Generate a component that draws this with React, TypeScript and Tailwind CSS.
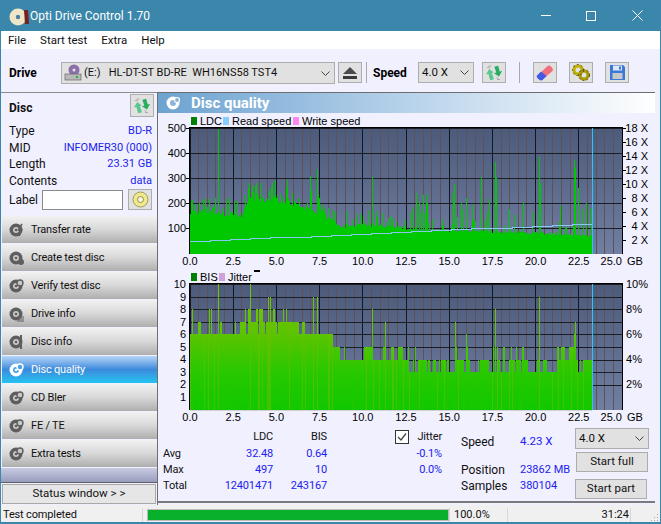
const UI = { fontFamily: "Roboto, 'Noto Sans', sans-serif" }

// small seeded generator so the chart looks the same on every run
let seed = 7
const rnd = () => {
    seed = (seed * 16807) % 2147483647
    return seed / 2147483647
}

const lerp = (pts: number[][], x: number) => {
    for (let i = 1; i < pts.length; i++) {
        if (x <= pts[i][0]) {
            const [x0, y0] = pts[i - 1]
            const [x1, y1] = pts[i]
            return y0 + ((y1 - y0) * (x - x0)) / (x1 - x0)
        }
    }
    return pts[pts.length - 1][1]
}

const LEFT = 190
const END = 592
const GB = 17.28

const LDC_ENV = [[0, 175], [1, 170], [3, 165], [3.4, 225], [5, 230], [6.5, 190], [7.5, 165], [8.3, 135], [8.7, 110], [10, 120], [12.5, 105], [13, 96], [17, 92], [20, 85], [23.4, 72]]
const LDC_SPIKES: Record<number, number> = { 218: 497, 495: 364, 539: 384, 574: 372, 578: 260, 481: 304, 453: 240, 466: 220, 372: 304, 317: 332, 310: 308, 496: 300, 540: 280, 575: 340 }

const ldcPath = () => {
    let d = ""
    for (let x = LEFT; x <= END; x++) {
        const base = lerp(LDC_ENV, (x - LEFT) / GB)
        let v = base * (0.88 + rnd() * 0.12)
        if (x < 400) {
            if (rnd() < 0.4) v += rnd() * (x < 250 ? 65 : x < 320 ? 85 : 70)
        } else if (rnd() < 0.35) {
            v += rnd() * rnd() * 200
        }
        if (LDC_SPIKES[x]) v = LDC_SPIKES[x]
        d += `M${x + 0.5} 254V${(253 - v * 0.25).toFixed(0)}`
    }
    return d
}

const BIS_SPIKES: Record<number, number> = { 218: 10, 250: 10, 268: 9, 270: 9, 313: 9, 317: 9, 539: 9, 495: 8, 455: 7, 575: 7, 466: 6, 574: 6, 192: 8, 209: 8, 211: 8, 245: 8, 257: 8, 262: 8, 372: 8, 385: 7 }

let prevLevel = 6
const bisLevel = (x: number) => {
    if (rnd() < 0.4) return prevLevel
    const g = (x - LEFT) / GB
    const r = rnd()
    if (g < 3.3) return r < 0.18 ? 7 : 6
    if (g < 6.5) return r < 0.22 ? 8 : r < 0.9 ? 7 : 6
    if (g < 8) return r < 0.2 ? 7 : 6
    if (g < 8.6) return r < 0.3 ? 6 : 5
    if (g < 12.5) return r < 0.22 ? 5 : r < 0.3 ? 6 : 4
    return r < 0.5 ? 4 : r < 0.58 ? 5 : 3
}

const bisPaths = () => {
    let main = ""
    let streak = ""
    let dark = ""
    for (let x = LEFT; x <= END; x++) {
        prevLevel = bisLevel(x)
        let v = prevLevel
        if (BIS_SPIKES[x]) v = BIS_SPIKES[x]
        if (x > 591) v = 2
        const top = (410 - v * 12.6).toFixed(0)
        main += `M${x + 0.5} 410V${top}`
        if (rnd() < 0.1 || BIS_SPIKES[x] > 8) streak += `M${x + 0.5} 410V${top}`
        if (rnd() < 0.25) dark += `M${x + 0.5} 410V${(410 - Math.min(v, 3) * 12.6 + 6 + rnd() * 20).toFixed(0)}`
    }
    return { main, streak, dark }
}

const readLine = () => {
    let d = `M${LEFT} 241`
    const n = 20
    for (let i = 1; i <= n; i++) {
        const x = LEFT + (i * (END - LEFT)) / n
        const y = 241 - (i * 18) / n
        d += `H${x.toFixed(0)}V${y.toFixed(0)}`
    }
    return d
}

const LDC_D = ldcPath()
const BIS_D = bisPaths()
const READ_D = readLine()

const XLABELS = ["0.0", "2.5", "5.0", "7.5", "10.0", "12.5", "15.0", "17.5", "20.0", "22.5"]

interface PlotProps {
    id: string
    top: number
    bottom: number
    hLines: number[]
}

const Plot = ({ id, top, bottom, hLines }: PlotProps) => {
    const minors = Array.from({ length: 50 }, (_, i) => i)
    return (
        <>
            <defs>
                <linearGradient id={id} x1="0" y1="0" x2="0" y2="1">
                    <stop offset="0" stopColor="#4c5b7b" />
                    <stop offset="1" stopColor="#707fa2" />
                </linearGradient>
            </defs>
            <rect x={LEFT} y={top} width={432} height={bottom - top} fill={`url(#${id})`} />
            {minors.map((i) => (
                <line key={i} x1={LEFT + 8.64 * i} x2={LEFT + 8.64 * i} y1={top} y2={bottom} stroke={i % 5 === 0 ? "#16161e" : "#5d5258"} strokeWidth="1" shapeRendering="crispEdges" />
            ))}
            {hLines.map((y) => (
                <line key={y} x1={LEFT} x2={622} y1={y} y2={y} stroke="#1c1c24" strokeWidth="1" shapeRendering="crispEdges" />
            ))}
        </>
    )
}

const Axis = ({ top, bottom, y }: { top: number; bottom: number; y: number }) => (
    <>
        <path d={`M${LEFT - 0.5} ${bottom}V${top - 0.5}H622.5V${bottom}`} fill="none" stroke="#000" strokeWidth="1.5" shapeRendering="crispEdges" />
        {XLABELS.map((t, i) => (
            <text key={t} x={LEFT + 43.2 * i} y={y} textAnchor="middle">{t}</text>
        ))}
        <text x={622} y={y} textAnchor="end">25.0</text>
        <text x={627} y={y}>GB</text>
    </>
)

const Chart1 = () => {
    const hLines = [128, 153, 178, 203, 228]
    return (
        <svg width="498" height="155" viewBox="157 113 498 155" className="block" fontFamily="'Liberation Sans', sans-serif" fontSize="11" fill="#000">
            <Plot id="bg1" top={128} bottom={254} hLines={hLines} />
            <path d={LDC_D} stroke="#00c800" strokeWidth="1" fill="none" shapeRendering="crispEdges" />
            <path d={READ_D} stroke="#86c8f0" strokeWidth="1" fill="none" shapeRendering="crispEdges" />
            <line x1="592.5" x2="592.5" y1="128" y2="254" stroke="#28c8f4" />
            <Axis top={128} bottom={254} y={265} />
            {[500, 400, 300, 200, 100].map((v, i) => (
                <g key={v}>
                    <text x={186} y={132 + i * 25} textAnchor="end">{v}</text>
                    <line x1={186} x2={190} y1={128.5 + i * 25} y2={128.5 + i * 25} stroke="#000" />
                </g>
            ))}
            {[18, 16, 14, 12, 10, 8, 6, 4, 2].map((v, i) => (
                <g key={v}>
                    <line x1={622} x2={626} y1={128.5 + i * 14} y2={128.5 + i * 14} stroke="#000" />
                    <text x={648} y={132 + i * 14} textAnchor="end">{v} X</text>
                </g>
            ))}
            <rect x={191} y={117} width={6} height={8} fill="#008000" />
            <text x={200} y={125}>LDC</text>
            <rect x={223} y={117} width={6} height={8} fill="#87ceff" />
            <text x={232} y={125}>Read speed</text>
            <rect x={293} y={117} width={6} height={8} fill="#ff87f0" />
            <text x={302} y={125}>Write speed</text>
        </svg>
    )
}

const Chart2 = () => {
    const hLines = Array.from({ length: 9 }, (_, i) => Math.round(284 + 12.6 * i))
    return (
        <svg width="498" height="156" viewBox="157 268 498 156" className="block" fontFamily="'Liberation Sans', sans-serif" fontSize="11" fill="#000">
            <defs>
                <linearGradient id="bisFill" gradientUnits="userSpaceOnUse" x1="0" y1="284" x2="0" y2="410">
                    <stop offset="0" stopColor="#80c000" />
                    <stop offset="0.4" stopColor="#5ac400" />
                    <stop offset="0.7" stopColor="#28c800" />
                    <stop offset="1" stopColor="#10c800" />
                </linearGradient>
            </defs>
            <Plot id="bg2" top={284} bottom={410} hLines={hLines} />
            <path d={BIS_D.main} stroke="url(#bisFill)" strokeWidth="1" fill="none" shapeRendering="crispEdges" />
            <path d={BIS_D.dark} stroke="#1cc800" strokeOpacity="0.7" strokeWidth="1" fill="none" shapeRendering="crispEdges" />
            <path d={BIS_D.streak} stroke="#70be00" strokeOpacity="0.5" strokeWidth="1" fill="none" shapeRendering="crispEdges" />
            <line x1="592.5" x2="592.5" y1="284" y2="410" stroke="#28c8f4" />
            <line x1={LEFT} x2={592} y1="410.5" y2="410.5" stroke="#d0d0d0" />
            <Axis top={284} bottom={410} y={421} />
            {[10, 9, 8, 7, 6, 5, 4, 3, 2, 1].map((v, i) => (
                <text key={v} x={186} y={288 + i * 12.55} textAnchor="end">{v}</text>
            ))}
            {[10, 8, 6, 4, 2].map((v, i) => (
                <text key={v} x={626} y={288 + i * 25} >{v}%</text>
            ))}
            <rect x={191} y={273} width={6} height={8} fill="#008000" />
            <text x={200} y={281}>BIS</text>
            <rect x={219} y={273} width={6} height={8} fill="#d0a0d8" />
            <text x={228} y={281}>Jitter</text>
            <rect x={254} y={270} width={6} height={2} fill="#000" />
        </svg>
    )
}

const Chevron = () => (
    <svg width="9" height="5" viewBox="0 0 9 5" className="shrink-0">
        <path d="M0.5 0.5 4.5 4.5 8.500 0.5" fill="none" stroke="#444" strokeWidth="1" />
    </svg>
)

const Arrows = () => (
    <svg width="20" height="18" viewBox="0 0 20 18">
        <path d="M2 9.500 6.500 5 10 9.500H8L8.500 16H4.500V9.500z" fill="#58c88c" transform="rotate(-15 6 10)" />
        <path d="M9.500 8H12L11.500 2H15.500V8H18L13.500 12.500z" fill="#28ae62" transform="rotate(-15 14 7)" />
        <path d="M3 3.500h3M4.500 2h3M13 15.500h3M12.500 14h2" stroke="#ababab" strokeWidth="1" />
    </svg>
)

const ToolButton = ({ children, className }: { children: React.ReactNode; className: string }) => (
    <div className={`flex h-[21px] w-[24px] shrink-0 items-center justify-center border border-[#adadad] bg-[#e1e1e1] ${className}`}>{children}</div>
)

const Toolbar = () => (
    <div className="flex h-[43px] items-start bg-[#f0f0ff] pt-[13px] text-[12px] text-black">
        <span className="ml-[8px] w-[52px] pt-[2px] font-bold">Drive</span>
        <div className="flex h-[22px] w-[274px] items-center border border-[#adadad] bg-[#e1e1e1] pl-[2px] pr-[4px]">
            <svg width="18" height="18" viewBox="0 0 18 18" className="shrink-0">
                <circle cx="10" cy="6" r="5.500" fill="#8a70a8" />
                <circle cx="10" cy="6" r="1.500" fill="#e8e0f0" />
                <rect x="1" y="10" width="16" height="6" fill="#b8b8b8" stroke="#666" strokeWidth="0.7" />
                <rect x="12" y="12" width="2" height="2" fill="#20b040" />
            </svg>
            <span className="ml-[2px] flex-1 whitespace-pre text-[11px] text-[#111]">(E:)   HL-DT-ST BD-RE  WH16NS58 TST4</span>
            <Chevron />
        </div>
        <ToolButton className="ml-[3px]">
            <svg width="16" height="14" viewBox="0 0 16 14">
                <path d="M8 1 15 8H1z" fill="#4a4a4a" />
                <rect x="1" y="10" width="14" height="3" fill="#3a3a3a" />
            </svg>
        </ToolButton>
        <div className="ml-[4px] h-[21px] w-px bg-[#a8a8a8]" />
        <span className="ml-[6px] w-[45px] pt-[2px] font-bold">Speed</span>
        <div className="flex h-[21px] w-[56px] items-center justify-between border border-[#adadad] bg-[#e1e1e1] pl-[3px] pr-[4px] text-[11.5px] text-[#111]">
            <span>4.0 X</span>
            <Chevron />
        </div>
        <ToolButton className="ml-[8px]"><Arrows /></ToolButton>
        <div className="ml-[13px] h-[21px] w-px bg-[#a8a8a8]" />
        <ToolButton className="ml-[13px]">
            <svg width="18" height="17" viewBox="0 0 18 17">
                <path d="M1.500 11.500 11 2.500a3 3 0 0 1 4 0l1 1a3 3 0 0 1 0 4l-9 7.500a3 3 0 0 1-4 0l-1.500-1a2 2 0 0 1 0-2.500z" fill="#f0707c" />
                <path d="M1.500 11 5 7.500 10.500 12 7 15.500a3 3 0 0 1-4 0L1.500 14a2 2 0 0 1 0-3z" fill="#4458e8" />
            </svg>
        </ToolButton>
        <ToolButton className="ml-[12px]">
            <svg width="18" height="17" viewBox="0 0 18 17">
                <circle cx="6" cy="6" r="4" fill="none" stroke="#c0b000" strokeWidth="3" />
                <circle cx="12" cy="11" r="4" fill="none" stroke="#a89a00" strokeWidth="3" />
                <circle cx="6" cy="6" r="5.500" fill="none" stroke="#55500a" strokeWidth="1" strokeDasharray="2 2" />
                <circle cx="12" cy="11" r="5.500" fill="none" stroke="#55500a" strokeWidth="1" strokeDasharray="2 2" />
            </svg>
        </ToolButton>
        <ToolButton className="ml-[12px]">
            <svg width="17" height="17" viewBox="0 0 17 17">
                <path d="M1 1H14L16 3V16H1z" fill="#3b78d8" />
                <rect x="4" y="1.500" width="9" height="5" fill="#dfe8f5" />
                <rect x="10" y="2.500" width="2" height="3" fill="#3b78d8" />
                <rect x="3.500" y="9" width="10" height="6" fill="#c8c8c8" />
            </svg>
        </ToolButton>
    </div>
)

const DiscGlyph = ({ active, badge }: { active?: boolean; badge: string }) => {
    const c = active ? "#ffffff" : "#5e5e5e"
    const hole = active ? "#4aa0e6" : "#c8c8c8"
    return (
        <svg width="16" height="16" viewBox="0 0 16 16" className="shrink-0">
            <circle cx="7" cy="8" r="6.500" fill={c} />
            <circle cx="7" cy="8" r="3" fill={hole} />
            <circle cx="7" cy="8" r="1.300" fill={c} />
            {badge === "bolt" && <path d="M13 2 9.500 8h3L10 14" fill="none" stroke={c} strokeWidth="1.600" />}
            {badge === "drop" && <circle cx="12" cy="12" r="3" fill={c} />}
            {badge === "search" && <circle cx="11" cy="5" r="3" fill={hole} stroke={c} strokeWidth="1.400" />}
            {badge === "lines" && <path d="M8 11h7M8 13h7M8 15h7" stroke={c} strokeWidth="1" />}
            {badge === "page" && <path d="M11 1h2v14h-2z" fill={c} />}
        </svg>
    )
}

const NAV = [
    { label: "Transfer rate", badge: "bolt" },
    { label: "Create test disc", badge: "drop" },
    { label: "Verify test disc", badge: "search" },
    { label: "Drive info", badge: "lines" },
    { label: "Disc info", badge: "page" },
    { label: "Disc quality", badge: "search", active: true },
    { label: "CD Bler", badge: "search" },
    { label: "FE / TE", badge: "search" },
    { label: "Extra tests", badge: "search" },
]

const NavItem = ({ label, badge, active }: { label: string; badge: string; active?: boolean }) => (
    <div
        className={
            active
                ? "flex h-[28px] items-center border-b border-[#f0f0ff] bg-gradient-to-b from-[#b5d5f6] via-[#3a8adc] to-[#22c4f0] pl-[7px] text-white"
                : "flex h-[28px] items-center border-b border-[#f0f0ff] bg-gradient-to-b from-[#f2f2f2] via-[#d8d8d8] to-[#aeaeae] pl-[7px] text-[#111]"
        }
    >
        <DiscGlyph active={active} badge={badge} />
        <span className="ml-[6px] pt-[2px] text-[11px] tracking-[-0.2px]">{label}</span>
    </div>
)

const InfoRow = ({ label, value }: { label: string; value: string }) => (
    <div className="flex h-[16.500px] items-center justify-between pl-[8px] pr-[5px]">
        <span>{label}</span>
        <span className="text-[11px] text-[#2222ee]">{value}</span>
    </div>
)

const Sidebar = () => (
    <div className="flex w-[156px] shrink-0 flex-col text-[12px] text-[#111]">
        <div className="flex h-[31px] items-start justify-between border-t border-[#8c8c8c] pl-[8px] pr-[3px] pt-[1px]">
            <span className="pt-[5px] font-bold">Disc</span>
            <ToolButton className="h-[23px]">
                <Arrows />
            </ToolButton>
        </div>
        <InfoRow label="Type" value="BD-R" />
        <InfoRow label="MID" value="INFOMER30 (000)" />
        <InfoRow label="Length" value="23.31 GB" />
        <InfoRow label="Contents" value="data" />
        <div className="flex h-[21px] items-center pl-[8px]">
            <span className="w-[33px]">Label</span>
            <div className="h-[20px] w-[81px] border border-[#8a8a8a] bg-white" />
            <div className="ml-[5px] flex h-[21px] w-[24px] items-center justify-center border border-[#adadad] bg-[#e1e1e1]">
                <svg width="17" height="17" viewBox="0 0 17 17">
                    <circle cx="8.500" cy="8.500" r="7.500" fill="#efe98c" stroke="#8a8a50" strokeWidth="0.800" />
                    <circle cx="8.500" cy="8.500" r="3" fill="#f8f6d8" stroke="#77773a" strokeWidth="0.800" />
                </svg>
            </div>
        </div>
        <div className="mt-[6px] flex flex-col pl-px">
            {NAV.map((n) => (
                <NavItem key={n.label} {...n} />
            ))}
        </div>
        <div className="h-[14px] bg-gradient-to-b from-[#c9cbe2] to-[#989dbd]" />
        <div className="h-px bg-[#5e5e66]" />
        <div className="ml-px mt-[1px] flex h-[20px] w-[154px] items-center justify-center border border-[#a8a8a8] bg-[#e6e6e6] text-[11.5px]">
            Status window &gt; &gt;
        </div>
    </div>
)

const StatCell = ({ children, className }: { children?: React.ReactNode; className: string }) => (
    <div className={`flex h-4 items-center ${className}`}>{children}</div>
)

const STATS = [
    { label: "Avg", ldc: "32.48", bis: "0.64", jitter: "-0.1%" },
    { label: "Max", ldc: "497", bis: "10", jitter: "0.0%" },
    { label: "Total", ldc: "12401471", bis: "243167", jitter: "" },
]

const Stats = () => (
    <div className="flex h-[77px] pl-[5px] pt-[5px] text-[12px] text-[#111]">
        <div className="flex w-[279px] shrink-0 flex-col text-[11px] tracking-[-0.15px]">
            <div className="mb-[1px] flex">
                <StatCell className="w-[40px]" />
                <StatCell className="w-[70px] justify-end">LDC</StatCell>
                <StatCell className="w-[54px] justify-end">BIS</StatCell>
                <div className="ml-[68px] flex h-4 w-[47px] items-center justify-between">
                    <span className="flex h-[14px] w-[14px] items-center justify-center border border-[#333] bg-white">
                        <svg width="10" height="10" viewBox="0 0 10 10">
                            <path d="M1 5 4 8 9 1.500" fill="none" stroke="#444" strokeWidth="1.300" />
                        </svg>
                    </span>
                    <span>Jitter</span>
                </div>
            </div>
            {STATS.map((s) => (
                <div className="flex" key={s.label}>
                    <StatCell className="w-[40px]">{s.label}</StatCell>
                    <StatCell className="w-[70px] justify-end text-[#2222ee]">{s.ldc}</StatCell>
                    <StatCell className="w-[54px] justify-end text-[#2222ee]">{s.bis}</StatCell>
                    <StatCell className="ml-[68px] w-[47px] justify-end text-[#2222ee]">{s.jitter}</StatCell>
                </div>
            ))}
        </div>
        <div className="ml-[19px] flex w-[114px] shrink-0 flex-col pt-[5px]">
            <div className="flex h-4 items-center"><span className="w-[59px]">Speed</span><span className="text-[11.5px] text-[#2222ee]">4.23 X</span></div>
            <div className="mt-[12px] flex h-4 items-center"><span className="w-[59px]">Position</span><span className="text-[11px] text-[#2222ee]">23862 MB</span></div>
            <div className="flex h-4 items-center"><span className="w-[59px]">Samples</span><span className="text-[11px] text-[#2222ee]">380104</span></div>
        </div>
        <div className="-mt-[1px] flex w-[74px] shrink-0 flex-col">
            <div className="flex h-[21px] items-center justify-between border border-[#adadad] bg-[#e1e1e1] pl-[3px] pr-[4px] text-[11.5px]">
                <span>4.0 X</span>
                <Chevron />
            </div>
            <div className="ml-px mt-[3px] flex h-[20px] w-[72px] items-center justify-center border border-[#adadad] bg-[#e1e1e1] text-[11.5px]">Start full</div>
            <div className="mt-[7px] flex h-[20px] w-[72px] items-center justify-center border border-[#adadad] bg-[#e1e1e1] text-[11.5px]">Start part</div>
        </div>
    </div>
)

const StatusBar = () => (
    <div className="flex h-[17px] items-center bg-[#f0f0f0] pt-[3px] text-[11px] text-[#111]">
        <span className="w-[141px] shrink-0 pl-[2px] tracking-[-0.15px]">Test completed</span>
        <div className="h-[14px] w-px bg-[#d8d8d8]" />
        <div className="ml-[4px] h-[12px] w-[302px] border border-[#bcbcbc] bg-[#09b02b]" />
        <div className="h-[14px] w-px bg-[#d8d8d8]" />
        <span className="ml-[4px] w-[53px]">100.0%</span>
        <div className="h-[14px] w-px bg-[#d8d8d8]" />
        <span className="w-[122px] pr-[1px] text-right">31:24</span>
        <div className="h-[14px] w-px bg-[#d8d8d8]" />
        <svg width="9" height="9" viewBox="0 0 9 9" className="ml-auto mr-[1px] mt-[4px]">
            <path d="M7 1h1v1H7zM4 4h1v1H4zM7 4h1v1H7zM1 7h1v1H1zM4 7h1v1H4zM7 7h1v1H7z" fill="#a8a8a8" />
        </svg>
    </div>
)

export default function App() {
    return (
        <div className="flex h-[524px] w-[661px] flex-col overflow-hidden bg-[#3a87ab] pb-[2px] pl-px pr-px" style={UI}>
            <div className="flex h-[31px] items-center text-white">
                <svg width="22" height="22" viewBox="0 0 22 22" className="ml-[7px] shrink-0">
                    <circle cx="10" cy="12" r="8.500" fill="#efe6c8" />
                    <circle cx="10" cy="12" r="2.200" fill="#4a7fa0" />
                    <path d="M16 5h4l1 14h-4z" fill="#7a1f1f" />
                </svg>
                <span className="text-[12px]">Opti Drive Control 1.70</span>
                <div className="ml-auto flex h-full items-center">
                    <div className="mr-[35px] h-px w-[10px] bg-white" />
                    <div className="mr-[36px] h-[10px] w-[10px] border border-white" />
                    <svg width="11" height="11" viewBox="0 0 11 11" className="mr-[17px]">
                        <path d="M0.500 0.500 10.500 10.500M10.500 0.500 0.500 10.500" stroke="#fff" strokeWidth="1" />
                    </svg>
                </div>
            </div>
            <div className="flex h-[18px] items-center gap-[14px] bg-white pl-[7px] pt-[2px] text-[11.5px] text-[#111]">
                <span>File</span>
                <span>Start test</span>
                <span>Extra</span>
                <span>Help</span>
            </div>
            <Toolbar />
            <div className="flex h-[413px] bg-[#f0f0ff]">
                <Sidebar />
                <div className="flex w-[498px] shrink-0 flex-col border-l border-t border-[#6e6e6e]">
                    <div className="flex h-[20px] shrink-0 items-center bg-gradient-to-r from-[#6da3d0] via-[#b7d2ea] to-white pl-[8px]">
                        <svg width="16" height="16" viewBox="0 0 16 16" className="shrink-0">
                            <circle cx="7" cy="8" r="6.500" fill="#fff" />
                            <circle cx="7" cy="8" r="3" fill="#8ab4d8" />
                            <circle cx="11" cy="5" r="2.500" fill="#8ab4d8" stroke="#fff" strokeWidth="1.200" />
                        </svg>
                        <span className="ml-[9px] text-[15px] font-bold text-white">Disc quality</span>
                    </div>
                    <div className="-ml-px">
                        <Chart1 />
                        <Chart2 />
                    </div>
                    <Stats />
                    <div className="h-[2px] bg-[#7a7a7a]" />
                </div>
            </div>
            <StatusBar />
        </div>
    )
}
